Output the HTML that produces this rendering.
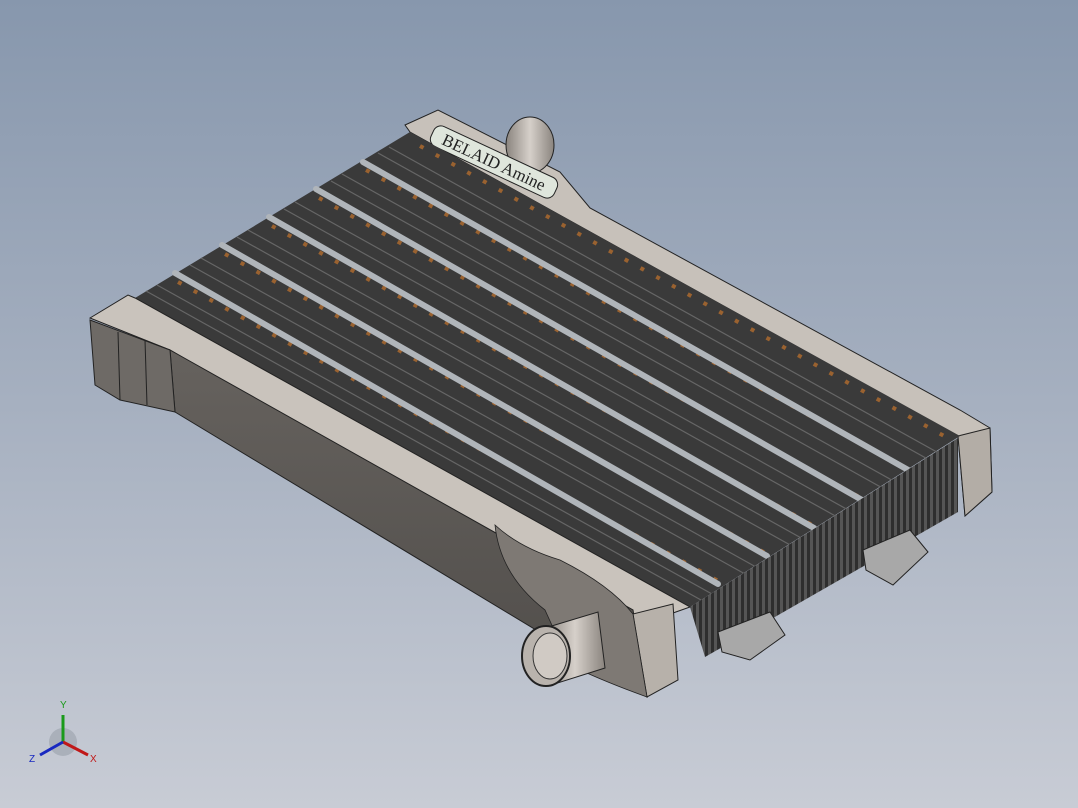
<!DOCTYPE html>
<html><head><style>
html,body{margin:0;padding:0;width:1078px;height:808px;overflow:hidden}
body{background:linear-gradient(180deg,#8797ad 0%,#a6b0c0 50%,#c8ccd5 100%)}
svg{position:absolute;left:0;top:0}
</style></head><body>
<svg width="1078" height="808" viewBox="0 0 1078 808" xmlns="http://www.w3.org/2000/svg">
<defs>
<linearGradient id="face" x1="0" y1="0" x2="0" y2="1">
<stop offset="0" stop-color="#66625e"/><stop offset="1" stop-color="#504d4a"/></linearGradient>
<linearGradient id="pipe" x1="0" y1="0" x2="1" y2="0">
<stop offset="0" stop-color="#8a847e"/><stop offset=".5" stop-color="#d6d0ca"/><stop offset="1" stop-color="#8a847e"/></linearGradient>
<pattern id="vfin" width="6" height="10" patternUnits="userSpaceOnUse">
<rect width="6" height="10" fill="#2e2e2e"/><rect x="0" width="3" height="10" fill="#555"/></pattern>
</defs>
<!-- back tank -->
<polygon points="405,125 438,110 560,172 590,208 960,410 990,428 992,492 965,516 958,436 410,132" fill="#c7c1ba" stroke="#222" stroke-width="1"/>
<polygon points="958,436 990,428 992,492 965,516" fill="#b3ada6" stroke="#222" stroke-width="1"/>
<!-- back pipe -->
<ellipse cx="530" cy="145" rx="24" ry="28" fill="url(#pipe)" stroke="#222"/>
<!-- label -->
<g transform="translate(494,162) rotate(25)">
<rect x="-68" y="-11" width="136" height="22" rx="8" fill="#dfe6dc" stroke="#222"/>
<text x="0" y="6" text-anchor="middle" font-family="Liberation Serif,serif" font-size="17" fill="#222">BELAID Amine</text>
</g>
<!-- fin top -->
<polygon points="135,298 410,132 960,436 690,607" fill="#3a3a3a"/>
<g stroke="#666" stroke-width="1.2">
<line x1="146" y1="291" x2="701" y2="600"/><line x1="157" y1="285" x2="712" y2="594"/>
<line x1="190" y1="265" x2="745" y2="574"/><line x1="201" y1="258" x2="756" y2="567"/>
<line x1="237" y1="237" x2="792" y2="546"/><line x1="248" y1="230" x2="803" y2="539"/>
<line x1="284" y1="209" x2="839" y2="518"/><line x1="295" y1="202" x2="850" y2="511"/>
<line x1="331" y1="181" x2="886" y2="490"/><line x1="342" y1="174" x2="897" y2="483"/>
<line x1="378" y1="153" x2="933" y2="462"/><line x1="389" y1="147" x2="944" y2="456"/>
</g>
<g stroke="#9a6230" stroke-width="4" stroke-dasharray="4 14">
<line x1="178" y1="282" x2="720" y2="582"/><line x1="225" y1="254" x2="767" y2="554"/>
<line x1="272" y1="226" x2="814" y2="526"/><line x1="319" y1="198" x2="861" y2="498"/>
<line x1="366" y1="170" x2="908" y2="470"/><line x1="420" y1="146" x2="955" y2="442"/>
</g>
<g stroke="#b0b5ba" stroke-width="6" stroke-linecap="round">
<line x1="175" y1="273" x2="718" y2="584"/><line x1="222" y1="245" x2="767" y2="556"/>
<line x1="269" y1="217" x2="814" y2="528"/><line x1="316" y1="189" x2="862" y2="500"/>
<line x1="363" y1="162" x2="910" y2="471"/>
</g>
<!-- fin front face -->
<polygon points="690,607 958,438 958,512 705,657" fill="url(#vfin)"/>
<!-- brackets -->
<polygon points="718,632 770,612 785,635 750,660 722,652" fill="#a8a8a8" stroke="#222"/>
<polygon points="863,550 910,530 928,552 893,585 866,570" fill="#a8a8a8" stroke="#222"/>
<!-- front tank top strip -->
<polygon points="90,318 128,295 135,298 690,607 673,613 633,624 170,350" fill="#c9c3bc" stroke="#222"/>
<!-- front face -->
<polygon points="170,350 633,610 647,697 175,412" fill="url(#face)" stroke="#222"/>
<polygon points="633,614 673,604 678,680 647,697" fill="#b7b1aa" stroke="#222"/>
<polygon points="90,320 170,350 175,412 120,400 95,385" fill="#6e6a66" stroke="#222"/>
<line x1="118" y1="332" x2="120" y2="400" stroke="#222"/>
<line x1="145" y1="340" x2="147" y2="405" stroke="#222"/>
<!-- bulge around pipe -->
<path d="M495,525 Q520,548 560,560 Q610,585 633,614 L647,697 Q600,680 570,665 L545,610 Q500,575 495,525 Z" fill="#7e7974" stroke="#222" stroke-width=".8"/>
<!-- front pipe -->
<path d="M545,628 L598,612 L605,668 L548,686 Z" fill="url(#pipe)" stroke="#222"/>
<ellipse cx="546" cy="656" rx="24" ry="30" fill="#b9b3ad" stroke="#222" stroke-width="2"/>
<ellipse cx="550" cy="656" rx="17" ry="23" fill="#d0cac4" stroke="#333"/>
<!-- triad -->
<g font-family="Liberation Sans,sans-serif" font-size="10">
<circle cx="63" cy="742" r="14" fill="#9aa0aa" opacity=".6"/>
<line x1="63" y1="742" x2="63" y2="715" stroke="#1a9a1a" stroke-width="3"/>
<line x1="63" y1="742" x2="88" y2="755" stroke="#c01818" stroke-width="3"/>
<line x1="63" y1="742" x2="40" y2="755" stroke="#1828c0" stroke-width="3"/>
<text x="60" y="708" fill="#1a9a1a">Y</text>
<text x="90" y="762" fill="#c01818">X</text>
<text x="29" y="762" fill="#1828c0">Z</text>
</g>
</svg>
</body></html>
